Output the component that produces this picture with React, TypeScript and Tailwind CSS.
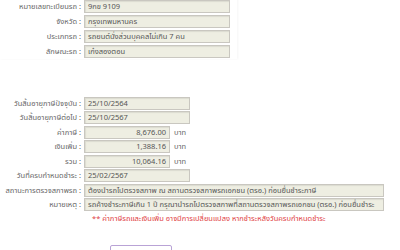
import React from 'react';

const font = { fontFamily: '"Noto Sans Thai", Tahoma, "Noto Sans", "DejaVu Sans", sans-serif' };

function Field({ label, children, h = 'h-[15px]' }: { label: string; children: React.ReactNode; h?: string }) {
  return (
    <div className={`flex items-center ${h}`}>
      <div className="w-[84px] shrink-0 text-right pr-[3px] text-[#666] whitespace-nowrap">{label} :</div>
      {children}
    </div>
  );
}

function Box({ value, width, right }: { value: string; width: string; right?: boolean }) {
  return (
    <div
      className={`${width} h-[13px] shrink-0 bg-[#eeeee2] border border-[#c9c7c0] shadow-[inset_1px_1px_1px_rgba(0,0,0,0.08)] text-[#555] px-[3px] leading-[11px] whitespace-nowrap overflow-hidden ${right ? 'text-right' : ''}`}
    >
      {value}
    </div>
  );
}

const low = 'h-[14.5px]';

export default function App() {
  return (
    <div className="w-[400px] h-[250px] bg-white overflow-hidden text-[7.5px]" style={font}>
      <div className="w-[237px] -mt-[1px] shadow-[1px_0_2px_rgba(0,0,0,0.04)]">
        <Field label="หมายเลขทะเบียนรถ"><Box value="9กข 9109" width="w-[146px]" /></Field>
        <Field label="จังหวัด"><Box value="กรุงเทพมหานคร" width="w-[146px]" /></Field>
        <Field label="ประเภทรถ"><Box value="รถยนต์นั่งส่วนบุคคลไม่เกิน 7 คน" width="w-[146px]" /></Field>
        <Field label="ลักษณะรถ"><Box value="เก๋งสองตอน" width="w-[146px]" /></Field>
      </div>

      <div className="mt-[37px]">
        <Field h={low} label="วันสิ้นอายุภาษีปัจจุบัน"><Box value="25/10/2564" width="w-[106px]" /></Field>
        <Field h={low} label="วันสิ้นอายุภาษีต่อไป"><Box value="25/10/2567" width="w-[106px]" /></Field>
        <Field h={low} label="ค่าภาษี">
          <Box value="8,676.00" width="w-[86px]" right />
          <span className="ml-[4px] text-[#666]">บาท</span>
        </Field>
        <Field h={low} label="เงินเพิ่ม">
          <Box value="1,388.16" width="w-[86px]" right />
          <span className="ml-[4px] text-[#666]">บาท</span>
        </Field>
        <Field h={low} label="รวม">
          <Box value="10,064.16" width="w-[86px]" right />
          <span className="ml-[4px] text-[#666]">บาท</span>
        </Field>
        <Field h={low} label="วันที่ครบกำหนดชำระ"><Box value="25/02/2567" width="w-[106px]" /></Field>
        <Field h={low} label="สถานะการตรวจสภาพรถ">
          <Box value="ต้องนำรถไปตรวจสภาพ ณ สถานตรวจสภาพรถเอกชน (ตรอ.) ก่อนยื่นชำระภาษี" width="w-[300px]" />
        </Field>
        <Field h={low} label="หมายเหตุ">
          <Box value="รถค้างชำระภาษีเกิน 1 ปี กรุณานำรถไปตรวจสภาพที่สถานตรวจสภาพรถเอกชน (ตรอ.) ก่อนยื่นชำระ" width="w-[300px]" />
        </Field>
        <div className="pl-[92px] h-[14.5px] leading-[14.5px] text-[#e0403f] whitespace-nowrap">
          ** ค่าภาษีรถและเงินเพิ่ม อาจมีการเปลี่ยนแปลง หากชำระหลังวันครบกำหนดชำระ
        </div>
      </div>

      <div className="mt-[18px] ml-[110px] w-[62px] h-[20px] border border-[#b9a3d6] rounded-[2px]" />
    </div>
  );
}
